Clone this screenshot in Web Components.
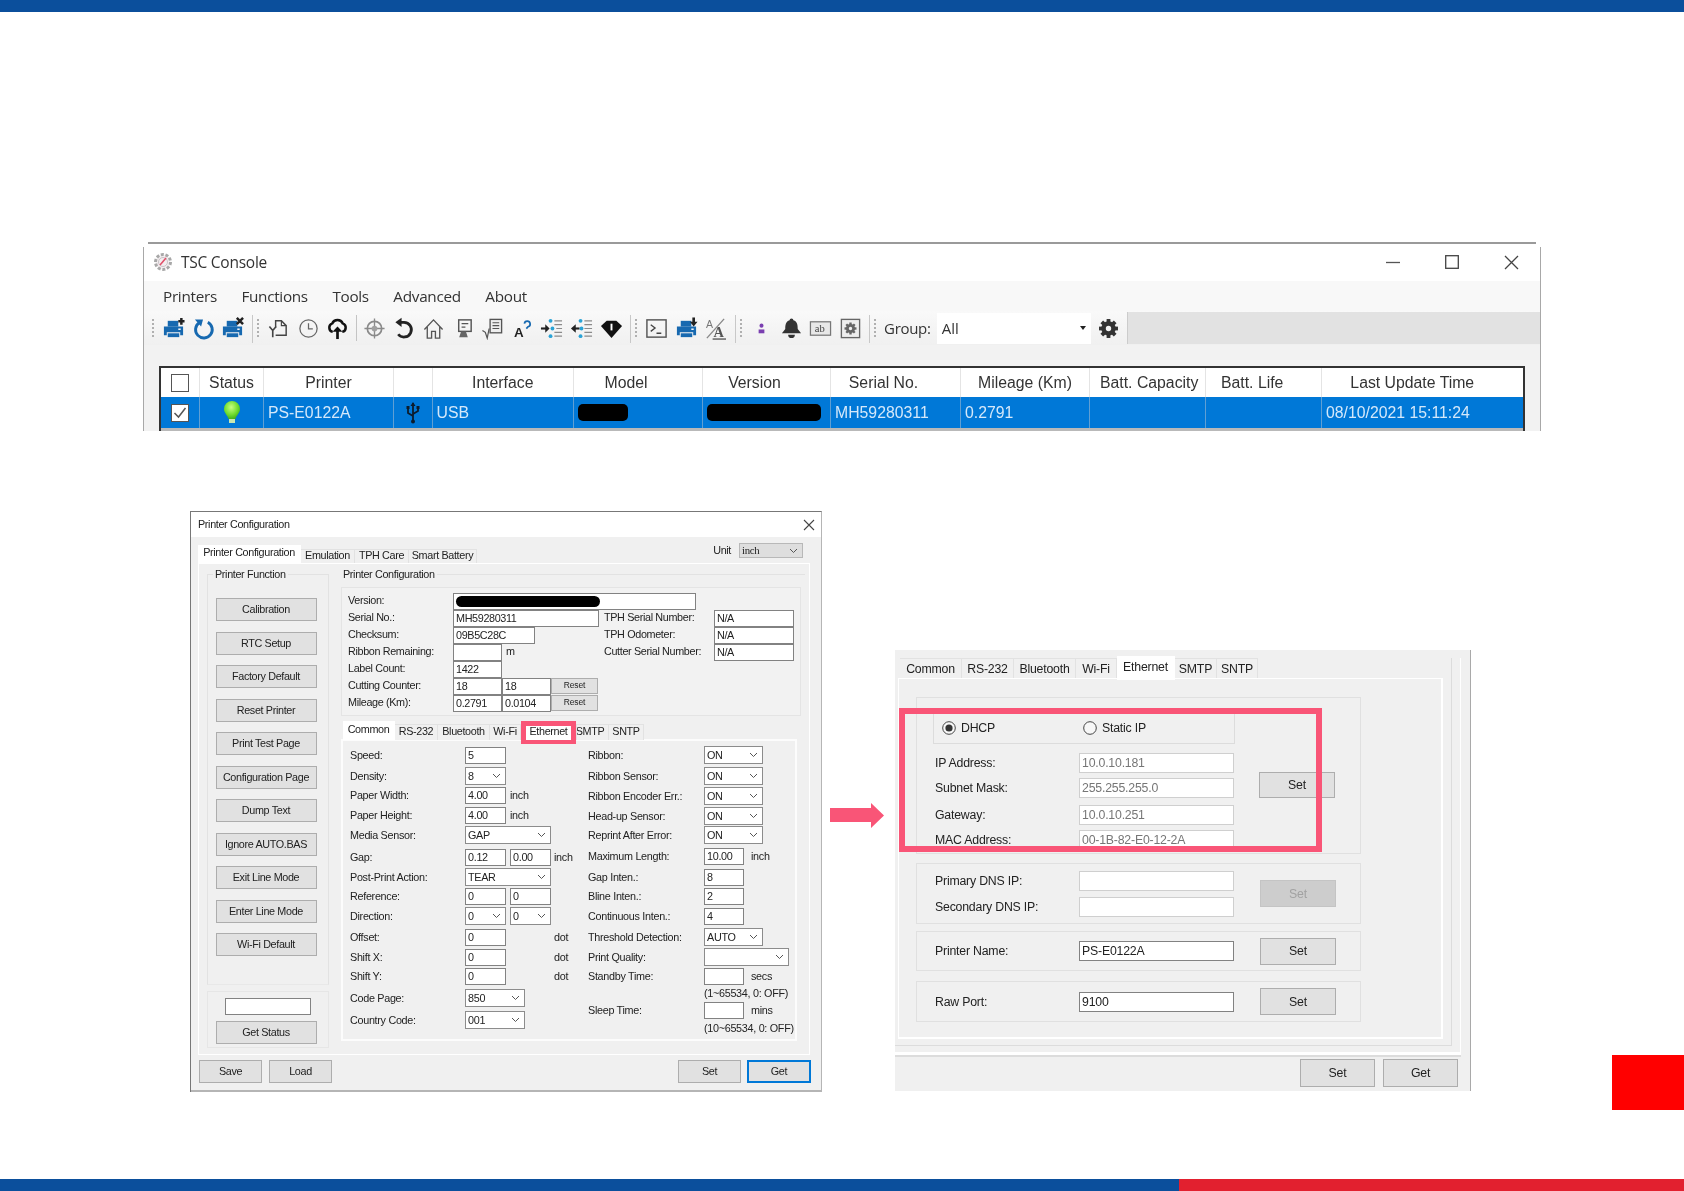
<!DOCTYPE html>
<html>
<head>
<meta charset="utf-8">
<title>TSC Console</title>
<style>
  html, body { margin: 0; background: #fff; }
</style>
</head>
<body>
<slide-page>
  <tsc-console slot="console"></tsc-console>
  <printer-config slot="config"></printer-config>
  <ethernet-panel slot="ethernet"></ethernet-panel>
</slide-page>

<script>
const BLUE = '#1769b0';
const DARK = '#222';

// ---- small toolbar icons, all on a 24 box ----
const svg = (body, size = 23) =>
  `<svg width="${size}" height="${size}" viewBox="0 0 24 24" fill="none" stroke-linecap="butt">${body}</svg>`;

function gearBody(cx, cy, r, color) {
  let teeth = '';
  for (let a = 0; a < 360; a += 45) {
    teeth += `<rect x="${cx - r * 0.26}" y="${cy - r * 1.3}" width="${r * 0.52}" height="${r * 0.6}" fill="${color}" transform="rotate(${a} ${cx} ${cy})"/>`;
  }
  return teeth + `<circle cx="${cx}" cy="${cy}" r="${r * 0.68}" fill="none" stroke="${color}" stroke-width="${r * 0.62}"/>`;
}

const printer = extra => `
  <rect x="6" y="4" width="11" height="6" fill="${BLUE}"/>
  <path d="M2 10h20v9h-3v-3H5v3H2z" fill="${BLUE}"/>
  <rect x="6" y="17" width="12" height="4" fill="${BLUE}"/>
  <rect x="17" y="12" width="2.5" height="1.5" fill="#fff"/>${extra}`;

const ICONS = {
  add: printer(`<path d="M17 4.5h6.5M20.2 1v7" stroke="${DARK}" stroke-width="2.6"/>`),
  refresh: `<path d="M7.5 6A8.7 8.7 0 1 0 16.5 5.5" stroke="${BLUE}" stroke-width="3"/><path d="M3 2.5l8.5 0-2 7.5z" fill="${BLUE}"/>`,
  remove: printer(`<path d="M16.5 1l6.5 6.5M23 1l-6.5 6.5" stroke="${DARK}" stroke-width="2.6"/>`),
  docBack: `<path d="M9 11V4h6l5 5v10H9" stroke="#444" stroke-width="1.5"/><path d="M15 4v5h5" stroke="#444" stroke-width="1.2"/><path d="M2.5 10l3.5 4 3.5-4M6 14v7" stroke="#444" stroke-width="1.7"/>`,
  clock: `<circle cx="12" cy="12" r="9" stroke="#666" stroke-width="1.3"/><path d="M12 6.5V12.5h4.5" stroke="#666" stroke-width="1.3"/>`,
  cloud: `<path d="M7 15.5a4.6 4.6 0 0 1-.5-8.8 6 6 0 0 1 11 0 4.6 4.6 0 0 1-.5 8.8" stroke="#111" stroke-width="2.6"/><path d="M12 23v-10" stroke="#111" stroke-width="2.8"/><path d="M6.8 15.5 12 10l5.2 5.5z" fill="#111"/>`,
  target: `<circle cx="12" cy="12" r="7.5" stroke="#8a8a8a" stroke-width="1.8"/><path d="M12 1.5v21M1.5 12h21" stroke="#8a8a8a" stroke-width="1.4"/><circle cx="12" cy="12" r="3" fill="#a0a0a0"/>`,
  undo: `<path d="M8 5.5h4.5a7.7 7.7 0 1 1-6 12.5" stroke="${DARK}" stroke-width="2.9"/><path d="M10 .8 3.5 5.5 10 10.5z" fill="${DARK}"/>`,
  home: `<path d="M2.5 13 12 3l9.500 10M5.500 10.500V22h4.500v-7h4v7h4.500V10.500" stroke="#555" stroke-width="1.4"/>`,
  stand: `<rect x="7" y="3" width="13" height="12" stroke="#555" stroke-width="1.5"/><path d="M10 7h7M10 10.500h4" stroke="#555" stroke-width="1.3"/><path d="M9.500 15 7.500 21h9l-2-6z" fill="#666"/>`,
  rootDoc: `<path d="M1.500 14l3 2 2 6 2-10" stroke="#555" stroke-width="1.3"/><rect x="9.500" y="2.500" width="12" height="14" stroke="#555" stroke-width="1.4" fill="#eee"/><path d="M12 6h7M12 9h7M12 12h7" stroke="#555" stroke-width="1.2"/>`,
  fontQ: `<text x="3" y="21" font-family="Liberation Sans, sans-serif" font-weight="700" font-size="14" fill="${DARK}">A</text><path d="M14 7a3 3 0 1 1 3.800 3.200l-1.800 2" stroke="${BLUE}" stroke-width="1.800"/>`,
  listIn: `<path d="M1 12h6" stroke="${DARK}" stroke-width="2.2"/><path d="M5.500 7.500 10 12l-4.500 4.500z" fill="${DARK}"/><g fill="#2ba3d6"><circle cx="11" cy="4" r="2"/><circle cx="13" cy="12" r="2"/><circle cx="11" cy="20" r="2"/></g><path d="M15 4h8M15 8h8M17 12h6M15 16h8M15 20h8" stroke="#8b8b8b" stroke-width="1.3"/>`,
  listOut: `<path d="M4 12h6" stroke="${DARK}" stroke-width="2.2"/><path d="M6 7.500 1 12l5 4.500z" fill="${DARK}"/><g fill="#2ba3d6"><circle cx="11" cy="4" r="2"/><circle cx="12" cy="12" r="2"/><circle cx="11" cy="20" r="2"/></g><path d="M15 4h8M15 8h8M15 12h8M15 16h8M15 20h8" stroke="#8b8b8b" stroke-width="1.3"/>`,
  wifi: `<path d="M1 9.500 7 4h10l6 5.500L12 22z" fill="#111"/><rect x="11" y="7" width="2" height="7" fill="#fff"/>`,
  term: `<rect x="2" y="3" width="20" height="18" stroke="#555" stroke-width="1.5"/><path d="M6 8l4.500 3.500L6 15M12 17h5" stroke="#444" stroke-width="1.4"/>`,
  download: printer(`<path d="M19.500 .5v6" stroke="${DARK}" stroke-width="2.8"/><path d="M15.500 5h8l-4 5z" fill="${DARK}"/>`),
  fontSize: `<text x="2" y="11" font-family="Liberation Sans, sans-serif" font-size="11" fill="#777">A</text><path d="M3 22 21 2" stroke="#888" stroke-width="1.4"/><text x="10" y="21" font-family="Liberation Serif, serif" font-weight="700" font-size="15" fill="#555">A</text><path d="M9 23h14" stroke="#555" stroke-width="1.4"/>`,
  person: `<circle cx="12" cy="9" r="2.100" fill="#7a3fb0"/><path d="M9 17v-4h6v4z" fill="#7a3fb0"/>`,
  bell: `<path d="M12 1.500a2 2 0 0 1 2 2c4 1 4.500 5 4.500 9l3.500 4.500H2L5.500 12.500c0-4 .5-8 4.500-9a2 2 0 0 1 2-2z" fill="#333"/><path d="M8.500 18.500a3.500 3.500 0 0 0 7 0z" fill="#333"/>`,
  abBox: `<rect x="1.500" y="5" width="21" height="14" fill="#e8e8e8" stroke="#777" stroke-width="1.3"/><text x="6" y="16" font-family="Liberation Serif, serif" font-size="11" fill="#444">ab</text>`,
  gearBox: `<rect x="2.500" y="2.500" width="19" height="19" fill="#eee" stroke="#666" stroke-width="1.400"/>${gearBody(12, 12, 4.800, '#666')}`,
};

class WinBtn extends HTMLElement {
  connectedCallback() {
    this.attachShadow({ mode: 'open' });
    this.shadowRoot.innerHTML = `
      <style>
        :host {
          display: inline-flex;
          align-items: center;
          justify-content: center;
          box-sizing: border-box;
          background: #e1e1e1;
          border: 1px solid #adadad;
          color: #222;
          white-space: nowrap;
          flex: none;
        }
        :host([disabled]) { background: #cdcdcd; border-color: #c4c4c4; color: #a2a2a2; }
        :host([focus]) { border: 2px solid #0078d7; }
      </style>
      <slot></slot>`;
  }
}

class WinInput extends HTMLElement {
  connectedCallback() {
    this.attachShadow({ mode: 'open' });
    this.shadowRoot.innerHTML = `
      <style>
        :host {
          display: flex;
          align-items: center;
          box-sizing: border-box;
          height: 17px;
          padding: 0 2px;
          background: #fff;
          border: 1px solid #828282;
          color: #222;
          white-space: nowrap;
          overflow: hidden;
          flex: none;
        }
        :host([soft]) { border-color: #cfcfcf; color: #767676; }
      </style>
      <slot></slot>`;
  }
}

class WinSelect extends HTMLElement {
  connectedCallback() {
    this.attachShadow({ mode: 'open' });
    this.shadowRoot.innerHTML = `
      <style>
        :host {
          display: flex;
          align-items: center;
          justify-content: space-between;
          box-sizing: border-box;
          height: 18px;
          margin-top: -1px;
          padding: 0 4px 0 2px;
          background: #fff;
          border: 1px solid #8c8c8c;
          color: #222;
          white-space: nowrap;
          flex: none;
        }
        svg { flex: none; }
      </style>
      <span><slot></slot></span>
      <svg width="9" height="6" viewBox="0 0 9 6"><path d="M1 1l3.500 3.500L8 1" fill="none" stroke="#555"/></svg>`;
  }
}

class WinTab extends HTMLElement {
  connectedCallback() {
    this.attachShadow({ mode: 'open' });
    this.shadowRoot.innerHTML = `
      <style>
        :host {
          display: inline-flex;
          align-items: center;
          justify-content: center;
          box-sizing: border-box;
          background: #f0f0f0;
          border: solid #e2e2e2;
          border-width: 1px 1px 0 0;
          color: #222;
          white-space: nowrap;
          flex: none;
        }
        :host([active]) { background: #fff; border-color: #fff; }
      </style>
      <slot></slot>`;
  }
}

class SlidePage extends HTMLElement {
  connectedCallback() {
    this.attachShadow({ mode: 'open' });
    this.shadowRoot.innerHTML = `
      <style>
        :host {
          display: flex;
          flex-direction: column;
          width: 1684px;
          height: 1191px;
          overflow: hidden;
          background: #fff;
        }
        .top { height: 12px; background: #0b4f9c; flex: none; }
        .console { display: block; margin: 230px 0 0 143px; }
        .lower { display: flex; align-items: flex-start; margin-top: 80px; }
        .config { margin-left: 190px; }
        .arrow { display: block; margin: 292px 0 0 8px; flex: none; }
        .ethernet { margin: 139px 0 0 11px; }
        .mark { width: 72px; height: 55px; margin: 544px 0 0 141px; background: #ff0000; flex: none; }
        .bottom { display: flex; height: 12px; margin-top: auto; flex: none; }
        .bottom div:first-child { width: 1179px; background: #0b4f9c; }
        .bottom div:last-child { flex: 1; background: #e2202f; }
      </style>
      <div class="top"></div>
      <div class="console"><slot name="console"></slot></div>
      <div class="lower">
        <div class="config"><slot name="config"></slot></div>
        <svg class="arrow" width="54" height="25" viewBox="0 0 54 25"><path d="M0 5h41V0l13 12.500L41 25v-6H0z" fill="#f95577"/></svg>
        <div class="ethernet"><slot name="ethernet"></slot></div>
        <div class="mark"></div>
      </div>
      <div class="bottom"><div></div><div></div></div>`;
  }
}

class ConsoleToolbar extends HTMLElement {
  connectedCallback() {
    this.attachShadow({ mode: 'open' });
    const ico = names => names.map(n => `<span class="ico">${svg(ICONS[n])}</span>`).join('');
    const sep = `<span class="sep"><i class="line"></i><i class="grip"></i></span>`;
    this.shadowRoot.innerHTML = `
      <style>
        :host {
          display: flex;
          align-items: center;
          height: 34px;
          background: linear-gradient(#f9f9f9, #f0f0f0);
          font: 15px "Open Sans", sans-serif;
          color: #333;
        }
        .ico { width: 29.600px; display: flex; justify-content: center; flex: none; }
        .sep { width: 16px; height: 30px; position: relative; flex: none; }
        .line { position: absolute; left: 4px; top: 2px; bottom: 0; width: 1px; background: #c8c8c8; }
        .grip { position: absolute; left: 9px; top: 6px; height: 18px; width: 2px;
          background: repeating-linear-gradient(#b0b0b0 0 2px, transparent 2px 4px); }
        .thin { width: 7px; height: 26px; display: flex; justify-content: center; flex: none; }
        .thin i { width: 1px; background: #c4c4c4; }
        .group { margin-left: 3px; white-space: nowrap; letter-spacing: -.3px; }
        .combo {
          display: flex; align-items: center; justify-content: space-between;
          box-sizing: border-box; width: 154px; height: 31px; margin-left: 6px; padding: 0 5px;
          background: #fff; flex: none;
        }
        .combo b { width: 0; height: 0; border: 3.500px solid transparent; border-top: 4px solid #222; border-bottom: 0; }
        .gear { margin-left: 2px; width: 31px; display: flex; justify-content: center; flex: none; }
        .rest { flex: 1; align-self: stretch; margin: 1px 0 1px 3px; background: #e2e2e2; border-left: 1px solid #ccc; }
        .first { position: relative; width: 15px; height: 30px; flex: none; }
        .first i { position: absolute; left: 8px; top: 6px; height: 18px; width: 2px;
          background: repeating-linear-gradient(#b0b0b0 0 2px, transparent 2px 4px); }
      </style>
      <span class="first"><i></i></span>
      ${ico(['add', 'refresh', 'remove'])}
      ${sep}
      ${ico(['docBack', 'clock', 'cloud'])}
      <span class="thin"><i></i></span>
      ${ico(['target', 'undo', 'home', 'stand', 'rootDoc', 'fontQ', 'listIn', 'listOut', 'wifi'])}
      ${sep}
      ${ico(['term', 'download', 'fontSize'])}
      ${sep}
      ${ico(['person', 'bell', 'abBox', 'gearBox'])}
      ${sep}
      <span class="group">Group:</span>
      <div class="combo"><span>All</span><b></b></div>
      <span class="gear"><svg width="23" height="23" viewBox="0 0 24 24">${gearBody(12, 12, 7.6, '#333')}</svg></span>
      <span class="rest"></span>`;
  }
}

class PrinterTable extends HTMLElement {
  connectedCallback() {
    this.attachShadow({ mode: 'open' });
    const head = ['', 'Status', 'Printer', '', 'Interface', 'Model', 'Version', 'Serial No.', 'Mileage (Km)', 'Batt. Capacity', 'Batt. Life', 'Last Update Time'];
    const box = checked => `<svg width="18" height="18" viewBox="0 0 18 18"><rect x=".5" y=".5" width="17" height="17" fill="#fff" stroke="#555"/>${checked ? '<path d="M3.500 9l4 4 7-9" fill="none" stroke="#555" stroke-width="1.500"/>' : ''}</svg>`;
    const bulb = `<svg width="16" height="24" viewBox="0 0 16 24"><defs><radialGradient id="g" cx=".45" cy=".35" r=".7"><stop offset="0" stop-color="#c8ff80"/><stop offset=".6" stop-color="#6fdc2e"/><stop offset="1" stop-color="#38a818"/></radialGradient></defs><path d="M8 0a8 8 0 0 1 8 8c0 4-3.500 6-4.500 10h-7C3.500 14 0 12 0 8a8 8 0 0 1 8-8z" fill="url(#g)"/><rect x="5" y="18" width="6" height="4" fill="#c9e8b0"/></svg>`;
    const usb = `<svg width="14" height="22" viewBox="0 0 14 22" fill="none" stroke="#0c1c2c" stroke-width="1.800"><path d="M7 1v20M2 6v5l5 3M12 6v3l-5 3"/><path d="M7 0l2.500 4h-5z" fill="#0c1c2c" stroke="none"/><rect x=".5" y="4" width="3" height="3" fill="#0c1c2c" stroke="none"/><rect x="10.500" y="4" width="3" height="3" fill="#0c1c2c" stroke="none"/><circle cx="7" cy="19.500" r="2" fill="#0c1c2c" stroke="none"/></svg>`;
    const blot = w => `<i class="blot" style="width:${w}px"></i>`;
    const row = [
      `<span class="mid nudge">${box(true)}</span>`,
      `<span class="mid">${bulb}</span>`,
      'PS-E0122A',
      `<span class="mid">${usb}</span>`,
      'USB',
      blot(50),
      blot(114),
      'MH59280311',
      '0.2791',
      '',
      '',
      '08/10/2021 15:11:24',
    ];
    head[0] = `<span class="mid">${box(false)}</span>`;
    const headClass = { 0: 'zero', 5: 'pull', 6: 'pull', 7: 'pull', 9: 'batt', 10: 'life', 11: 'last' };
    this.shadowRoot.innerHTML = `
      <style>
        :host {
          display: block;
          box-sizing: border-box;
          border: solid #333;
          border-width: 2px 2px 0;
          background: #fff;
          font: 15.800px "Liberation Sans", Arial, sans-serif;
        }
        .grid {
          display: grid;
          grid-template-columns: 39px 64px 130px 38.500px 141.500px 129px 128px 130px 129px 116px 116px 1fr;
        }
        .h, .c { display: flex; align-items: center; box-sizing: border-box; white-space: nowrap; }
        .h { height: 29px; justify-content: center; color: #333; border-right: 1px solid #e4e4e4; }
        .h.zero .mid { margin-left: -1px; }
        .h.pull { padding-right: 24px; }
        .h.batt { justify-content: flex-start; padding-left: 10px; }
        .h.life { justify-content: flex-start; padding-left: 15px; }
        .h.last { padding-right: 20px; border-right: 0; }
        .c { height: 31px; padding-left: 4px; background: #0078d7; color: #d4e8fa; border-right: 1px solid #5f9fd4; }
        .c:last-child { border-right: 0; }
        .mid { display: flex; flex: 1; justify-content: center; margin-left: -4px; }
        .nudge { margin-left: -5px; }
        .blot { display: block; height: 17px; border-radius: 5px; background: #000; }
        .clip { height: 3px; background: #b9b9b9; }
      </style>
      <div class="grid">
        ${head.map((t, i) => `<div class="h ${headClass[i] || ''}">${t}</div>`).join('')}
        ${row.map(t => `<div class="c">${t}</div>`).join('')}
      </div>
      <div class="clip"></div>`;
  }
}

class TscConsole extends HTMLElement {
  connectedCallback() {
    this.attachShadow({ mode: 'open' });
    const menu = ['Printers', 'Functions', 'Tools', 'Advanced', 'About'];
    const logo = `<svg width="20" height="22" viewBox="0 0 20 22"><circle cx="10" cy="11" r="7.500" fill="#f4eef0" stroke="#a8a8a8" stroke-width="3" stroke-dasharray="3 1.700"/><circle cx="10" cy="11" r="4.500" fill="none" stroke="#c9c2c6"/><path d="M7 14 13 7" stroke="#e0506a" stroke-width="1.600"/></svg>`;
    this.shadowRoot.innerHTML = `
      <style>
        :host {
          display: block;
          width: 1398px;
          filter: blur(.55px);
          font: 15.500px "Open Sans", sans-serif;
          color: #333;
        }
        .rule { height: 2px; margin: 0 5px 3px; background: #9a9a9a; }
        .win { border: solid #a8a8a8; border-width: 0 1.500px; }
        .title { display: flex; align-items: center; box-sizing: border-box; height: 34px; background: #fff; padding: 0 0 4px 9px; }
        .title span { margin-left: 8px; letter-spacing: -.25px; }
        .ctrls { margin-left: auto; display: flex; align-items: center; }
        .ctrls svg { display: block; }
        .menu { display: flex; height: 30px; align-items: center; background: #f8f8f8; padding-left: 19px; gap: 24.500px; font-size: 15.300px; letter-spacing: -.3px; }
        .gap { height: 21px; background: #f2f2f2; }
        .tablewrap { background: #f2f2f2; padding: 0 15.500px 0 15px; }
      </style>
      <div class="rule"></div>
      <div class="win">
        <div class="title">
          ${logo}<span>TSC Console</span>
          <div class="ctrls">
            <svg width="14" height="14" viewBox="0 0 14 14" style="margin-right:45px"><path d="M0 7.500h14" stroke="#555" stroke-width="1.300"/></svg>
            <svg width="14" height="14" viewBox="0 0 14 14" style="margin-right:45px"><rect x=".7" y=".7" width="12.600" height="12.600" fill="none" stroke="#444" stroke-width="1.300"/></svg>
            <svg width="15" height="15" viewBox="0 0 15 15" style="margin-right:21px"><path d="M1 1l13 13M14 1 1 14" stroke="#444" stroke-width="1.300"/></svg>
          </div>
        </div>
        <div class="menu">${menu.map(m => `<span>${m}</span>`).join('')}</div>
        <console-toolbar></console-toolbar>
        <div class="gap"></div>
        <div class="tablewrap"><printer-table></printer-table></div>
      </div>`;
  }
}

// row list helper: [row height, label, controls html]
const inp = (w, v = '') => `<win-input style="width:${w}px">${v}</win-input>`;
const sel = (w, v = '') => `<win-select style="width:${w}px">${v}</win-select>`;
const unit = (t, ml) => `<span class="unit" style="margin-left:${ml}px">${t}</span>`;

class CommonForm extends HTMLElement {
  connectedCallback() {
    this.attachShadow({ mode: 'open' });
    const left = [
      [21, 'Speed:', inp(41, '5')],
      [19, 'Density:', sel(41, '8')],
      [20, 'Paper Width:', inp(41, '4.00') + unit('inch', 4)],
      [20, 'Paper Height:', inp(41, '4.00') + unit('inch', 4)],
      [22, 'Media Sensor:', sel(86, 'GAP')],
      [20, 'Gap:', inp(41, '0.12') + inp(41, '0.00') + unit('inch', 3)],
      [19, 'Post-Print Action:', sel(86, 'TEAR')],
      [20, 'Reference:', inp(41, '0') + inp(41, '0')],
      [21, 'Direction:', sel(41, '0') + sel(41, '0')],
      [20, 'Offset:', inp(41, '0') + unit('dot', 48)],
      [19, 'Shift X:', inp(41, '0') + unit('dot', 48)],
      [22, 'Shift Y:', inp(41, '0') + unit('dot', 48)],
      [22, 'Code Page:', sel(60, '850')],
      [20, 'Country Code:', sel(60, '001')],
    ];
    const right = [
      [21, 'Ribbon:', sel(59, 'ON')],
      [20, 'Ribbon Sensor:', sel(59, 'ON')],
      [20, 'Ribbon Encoder Err.:', sel(59, 'ON')],
      [19, 'Head-up Sensor:', sel(59, 'ON')],
      [21, 'Reprint After Error:', sel(59, 'ON')],
      [21, 'Maximum Length:', inp(40, '10.00') + unit('inch', 7)],
      [19, 'Gap Inten.:', inp(40, '8')],
      [20, 'Bline Inten.:', inp(40, '2')],
      [21, 'Continuous Inten.:', inp(40, '4')],
      [20, 'Threshold Detection:', sel(59, 'AUTO')],
      [19, 'Print Quality:', sel(85)],
      [17, 'Standby Time:', inp(40) + unit('secs', 7)],
      [17, '', unit('(1~65534, 0: OFF)', 0)],
      [18, 'Sleep Time:', inp(40) + unit('mins', 7)],
      [17, '', unit('(10~65534, 0: OFF)', 0)],
    ];
    const rows = list => list.map(([h, label, ctl]) =>
      `<div class="row" style="height:${h}px"><span class="label">${label}</span>${ctl}</div>`).join('');
    this.shadowRoot.innerHTML = `
      <style>
        :host {
          display: flex;
          box-sizing: border-box;
          height: 302px;
          padding: 6px 0 0 7px;
          background: #f0f0f0;
          border: 2px solid #fcfcfc;
          font: 10.800px/17px "Liberation Sans", Arial, sans-serif;
          letter-spacing: -.3px;
          color: #222;
        }
        .col { flex: none; }
        .a { width: 238px; --lab: 115px; }
        .b { --lab: 116px; }
        .row { display: flex; align-items: flex-start; }
        .label { width: var(--lab); flex: none; white-space: nowrap; }
        .unit { white-space: nowrap; }
        win-input + win-input, win-select + win-select { margin-left: 4px; }
      </style>
      <div class="col a">${rows(left)}</div>
      <div class="col b">${rows(right)}</div>`;
  }
}

class PrinterConfig extends HTMLElement {
  connectedCallback() {
    this.attachShadow({ mode: 'open' });
    const funcs = ['Calibration', 'RTC Setup', 'Factory Default', 'Reset Printer', 'Print Test Page', 'Configuration Page', 'Dump Text', 'Ignore AUTO.BAS', 'Exit Line Mode', 'Enter Line Mode', 'Wi-Fi Default'];
    this.shadowRoot.innerHTML = `
      <style>
        :host {
          display: block;
          box-sizing: border-box;
          width: 632px;
          height: 581px;
          filter: blur(.35px);
          border: solid #777;
          border-width: 1px 1px 0 1px;
          border-right-color: #b5b5b5;
          font: 10.800px/17px "Liberation Sans", Arial, sans-serif;
          letter-spacing: -.35px;
          color: #222;
        }
        .title { display: flex; align-items: center; justify-content: space-between; height: 25px; padding: 0 6px 0 7px; background: #fff; }
        .body { height: 555px; box-sizing: border-box; padding: 8px 10px 0 7px; background: #f0f0f0; border-bottom: 2px solid #b5b5b5; }
        .strip { display: flex; align-items: flex-end; height: 18px; }
        .strip win-tab { height: 14px; padding-bottom: 3px; }
        .strip win-tab[active] { height: 18px; padding-bottom: 4px; }
        .unit-wrap { margin-left: auto; display: flex; align-items: center; height: 15px; margin-top: -2px; margin-right: 8px; align-self: flex-start; }
        .unit-wrap span { margin-right: 8px; }
        .unit-wrap win-select { margin-top: 0; height: 15px; width: 64px; background: #dedede; border-color: #b8b8b8; font-family: "Liberation Serif", serif; }
        .pane { display: flex; box-sizing: border-box; width: 612px; height: 492px; border: 1px solid #fff; padding-top: 4px; }
        fieldset { margin: 0; padding: 0; min-width: 0; border: 1px solid #e2e2e2; box-sizing: border-box; }
        legend { padding: 0 2px; line-height: 12px; margin-left: 4px; }
        .funcs { width: 122px; height: 417px; margin-left: 8px; padding: 18px 4px 0 0; flex: none;
          display: flex; flex-direction: column; align-items: center; gap: 10.500px; border-bottom-color: #e8e8e8; }
        .funcs legend { margin-left: 5px; }
        .funcs win-btn { width: 101px; height: 23px; }
        .leftcol { flex: none; }
        .status { box-sizing: border-box; width: 122px; height: 57px; margin: 6px 0 0 8px; padding-top: 6px;
          display: flex; flex-direction: column; align-items: center; gap: 6px; border: 1px solid #e6e6e6; }
        .status win-input { width: 86px; }
        .status win-btn { width: 101px; height: 23px; margin-right: 4px; }
        .rightcol { width: 464px; margin-left: 12px; flex: none; }
        .cfg { border-width: 1px 0 0; padding-top: 7px; }
        .cfg legend { margin-left: 0; }
        .box { box-sizing: border-box; width: 460px; height: 129px; padding: 4px 0 0 6px; border: 1px solid #e4e4e4; background: #f2f2f2; }
        .box .r { display: flex; height: 17px; align-items: center; }
        .box .l { width: 105px; flex: none; white-space: nowrap; }
        .box .c { width: 146px; display: flex; flex: none; align-items: center; }
        .box .c span { margin-left: 4px; }
        .box .t { margin-left: 5px; width: 110px; flex: none; white-space: nowrap; }
        .box win-input { margin-bottom: -1px; }
        .box win-btn { width: 47px; height: 16px; margin-left: 0; font-size: 8.500px; letter-spacing: -.1px; }
        .blot { display: block; height: 11px; width: 144px; border-radius: 6px; background: #000; margin-left: 0; }
        .tabs { display: flex; align-items: flex-end; height: 19px; margin: 5px 0 0 2px; }
        .tabs win-tab { height: 16px; padding-bottom: 2px; position: relative; }
        .tabs win-tab[active] { height: 19px; padding-bottom: 3px; }
        .hl::after { content: ""; position: absolute; left: 0; right: 0; top: -4px; bottom: -4px; border: solid #f95577; border-width: 5px; border-bottom-width: 4px; }
        .hl { background: #fff; z-index: 1; }
        common-form { width: 456px; margin: -1px 0 0 0; }
        .actions { display: flex; gap: 7px; padding: 5px 0 0 1px; }
        .actions win-btn { width: 63px; height: 23px; }
        .actions .push { margin-left: auto; }
        .actions win-btn:last-child { margin-left: -1px; width: 64px; }
        svg.x { display: block; }
      </style>
      <div class="title">
        <span>Printer Configuration</span>
        <svg class="x" width="12" height="12" viewBox="0 0 12 12"><path d="M1 1l10 10M11 1 1 11" stroke="#444" stroke-width="1.100"/></svg>
      </div>
      <div class="body">
        <div class="strip">
          <win-tab active style="width:103px">Printer Configuration</win-tab>
          <win-tab style="width:54px">Emulation</win-tab>
          <win-tab style="width:54px">TPH Care</win-tab>
          <win-tab style="width:68px">Smart Battery</win-tab>
          <div class="unit-wrap"><span>Unit</span><win-select>inch</win-select></div>
        </div>
        <div class="pane">
          <div class="leftcol">
            <fieldset class="funcs">
              <legend>Printer Function</legend>
              ${funcs.map(f => `<win-btn>${f}</win-btn>`).join('')}
            </fieldset>
            <div class="status"><win-input></win-input><win-btn>Get Status</win-btn></div>
          </div>
          <div class="rightcol">
            <fieldset class="cfg">
              <legend>Printer Configuration</legend>
              <div class="box">
                <div class="r"><span class="l">Version:</span><win-input style="width:243px"><i class="blot"></i></win-input></div>
                <div class="r"><span class="l">Serial No.:</span><div class="c"><win-input style="width:146px">MH59280311</win-input></div><span class="t">TPH Serial Number:</span><win-input style="width:80px">N/A</win-input></div>
                <div class="r"><span class="l">Checksum:</span><div class="c"><win-input style="width:82px">09B5C28C</win-input></div><span class="t">TPH Odometer:</span><win-input style="width:80px">N/A</win-input></div>
                <div class="r"><span class="l">Ribbon Remaining:</span><div class="c"><win-input style="width:49px"></win-input><span>m</span></div><span class="t">Cutter Serial Number:</span><win-input style="width:80px">N/A</win-input></div>
                <div class="r"><span class="l">Label Count:</span><div class="c"><win-input style="width:49px">1422</win-input></div></div>
                <div class="r"><span class="l">Cutting Counter:</span><div class="c"><win-input style="width:49px">18</win-input><win-input style="width:49px">18</win-input><win-btn>Reset</win-btn></div></div>
                <div class="r"><span class="l">Mileage (Km):</span><div class="c"><win-input style="width:49px">0.2791</win-input><win-input style="width:49px">0.0104</win-input><win-btn>Reset</win-btn></div></div>
              </div>
            </fieldset>
            <div class="tabs">
              <win-tab active style="width:52px">Common</win-tab>
              <win-tab style="width:43px">RS-232</win-tab>
              <win-tab style="width:52px">Bluetooth</win-tab>
              <win-tab style="width:31px">Wi-Fi</win-tab>
              <win-tab class="hl" style="width:56px"><span style="position:relative;z-index:2">Ethernet</span></win-tab>
              <win-tab style="width:32px;padding-right:5px">SMTP</win-tab>
              <win-tab style="width:35px">SNTP</win-tab>
            </div>
            <common-form></common-form>
          </div>
        </div>
        <div class="actions">
          <win-btn>Save</win-btn><win-btn>Load</win-btn>
          <win-btn class="push">Set</win-btn><win-btn focus>Get</win-btn>
        </div>
      </div>`;
  }
}

class EthernetPanel extends HTMLElement {
  connectedCallback() {
    this.attachShadow({ mode: 'open' });
    const radio = on => `<svg width="14" height="14" viewBox="0 0 14 14"><circle cx="7" cy="7" r="6.300" fill="#f7f7f7" stroke="#444"/>${on ? '<circle cx="7" cy="7" r="3.600" fill="#333"/>' : ''}</svg>`;
    const field = (label, value, attr = 'soft', mt = 0) =>
      `<div class="f" style="margin-top:${mt}px"><span class="l">${label}</span><win-input ${attr} style="width:155px;height:20px">${value}</win-input></div>`;
    this.shadowRoot.innerHTML = `
      <style>
        :host {
          display: block;
          box-sizing: border-box;
          width: 576px;
          height: 441px;
          padding: 8px 0 0 0;
          filter: blur(.2px);
          background: #f0f0f0;
          border-right: 1px solid #a9a9a9;
          font: 12.300px "Liberation Sans", Arial, sans-serif;
          letter-spacing: -.2px;
          color: #222;
        }
        .outer { width: 566px; height: 397px; box-sizing: border-box; border: solid #fff; border-width: 0 1px 3px 0; box-shadow: 0 2px 0 #dcdcdc; }
        .inner { width: 557px; height: 388px; box-sizing: border-box; border: solid #dcdcdc; border-width: 0 1px 1px 0; }
        .tabs { display: flex; align-items: flex-end; height: 20px; padding-left: 5px; position: relative; z-index: 1; }
        .tabs win-tab { height: 20px; }
        .tabs win-tab[active] { height: 24px; margin-bottom: -2px; padding-bottom: 4px; }
        .pane { position: relative; box-sizing: border-box; width: 545px; height: 361px; margin-left: 3px; padding: 18px 0 0 17px; border: 1px solid #fff; border-width: 1px 2px 2px 1px; }
        .g { box-sizing: border-box; width: 445px; border: 1px solid #e0e0e0; display: flex; align-items: center; padding-left: 18px; }
        .g win-btn { width: 76px; height: 27px; margin-left: 26px; }
        .g1 { height: 157px; align-items: flex-start; padding: 13px 0 0 16px; }
        .g1 win-btn { margin: 61px 0 0 24px; height: 26px; }
        .g2 { height: 61px; margin-top: 9px; }
        .g3 { height: 40px; margin-top: 7px; }
        .g4 { height: 41px; margin-top: 10px; }
        .fields { flex: none; }
        .radios { box-sizing: border-box; width: 302px; height: 33px; display: flex; align-items: center; padding-left: 8px; border: 1px solid #dcdcdc; }
        .radios span { margin: 0 6px 0 5px; }
        .radios span:nth-of-type(1) { width: 85px; margin-right: 37px; }
        .f { display: flex; align-items: center; }
        .f .l { width: 144px; flex: none; white-space: nowrap; }
        .g1 .fields { width: 302px; }
        .g1 .f { padding-left: 2px; }
        .g win-input { font-size: 12.300px; }
        .pink { position: absolute; left: 0; top: 29px; width: 423px; height: 144px; box-sizing: border-box; border: 6px solid #f95577; pointer-events: none; }
        .actions { display: flex; justify-content: flex-end; gap: 8px; padding: 4px 12px 0 0; }
        .actions win-btn { width: 75px; height: 28px; }
      </style>
      <div class="outer"><div class="inner">
        <div class="tabs">
          <win-tab style="width:62px">Common</win-tab>
          <win-tab style="width:52px">RS-232</win-tab>
          <win-tab style="width:62px">Bluetooth</win-tab>
          <win-tab style="width:41px">Wi-Fi</win-tab>
          <win-tab active style="width:58px">Ethernet</win-tab>
          <win-tab style="width:42px">SMTP</win-tab>
          <win-tab style="width:41px">SNTP</win-tab>
        </div>
        <div class="pane">
          <div class="g g1">
            <div class="fields">
              <div class="radios">${radio(true)}<span>DHCP</span>${radio(false)}<span>Static IP</span></div>
              ${field('IP Address:', '10.0.10.181', 'soft', 9)}
              ${field('Subnet Mask:', '255.255.255.0', 'soft', 5)}
              ${field('Gateway:', '10.0.10.251', 'soft', 7)}
              ${field('MAC Address:', '00-1B-82-E0-12-2A', 'soft', 5)}
            </div>
            <win-btn>Set</win-btn>
          </div>
          <div class="g g2">
            <div class="fields">${field('Primary DNS IP:', '', 'soft')}${field('Secondary DNS IP:', '', 'soft', 6)}</div>
            <win-btn disabled>Set</win-btn>
          </div>
          <div class="g g3">
            <div class="fields">${field('Printer Name:', 'PS-E0122A', '')}</div>
            <win-btn>Set</win-btn>
          </div>
          <div class="g g4">
            <div class="fields">${field('Raw Port:', '9100', '')}</div>
            <win-btn>Set</win-btn>
          </div>
          <div class="pink"></div>
        </div>
      </div></div>
      <div class="actions"><win-btn>Set</win-btn><win-btn>Get</win-btn></div>`;
  }
}

customElements.define('win-btn', WinBtn);
customElements.define('win-input', WinInput);
customElements.define('win-select', WinSelect);
customElements.define('win-tab', WinTab);
customElements.define('slide-page', SlidePage);
customElements.define('console-toolbar', ConsoleToolbar);
customElements.define('printer-table', PrinterTable);
customElements.define('tsc-console', TscConsole);
customElements.define('common-form', CommonForm);
customElements.define('printer-config', PrinterConfig);
customElements.define('ethernet-panel', EthernetPanel);
</script>
</body>
</html>
